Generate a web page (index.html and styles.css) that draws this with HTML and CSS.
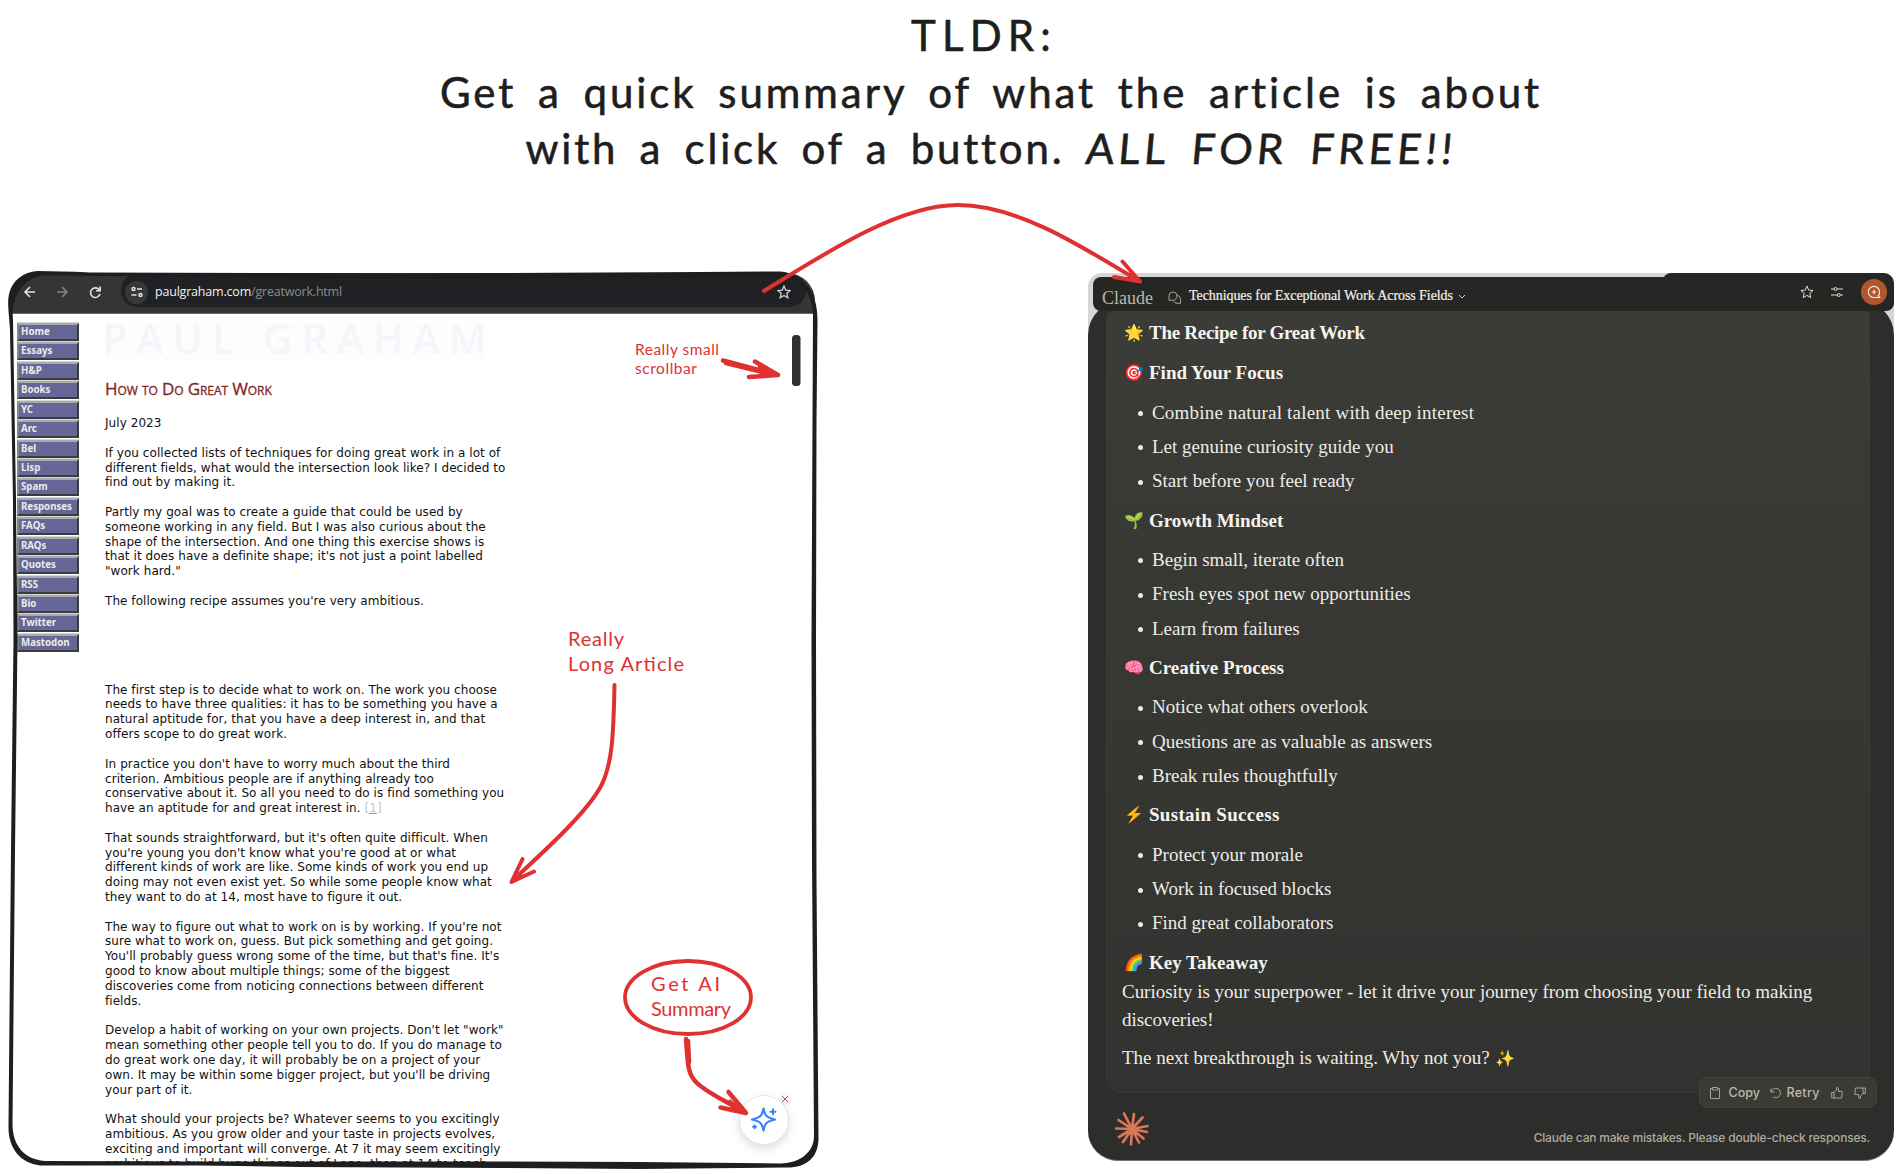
FILE: index.html
```html
<!DOCTYPE html>
<html lang="en">
<head>
<meta charset="utf-8">
<title>TLDR</title>
<link rel="stylesheet" href="styles.css">
</head>
<body>
<main class="canvas">
  <h1 class="headline">
    <span class="line line-1">TLDR:</span>
    <span class="line line-2">Get a quick summary of what the article is about</span>
    <span class="line line-3">with a click of a button. <span class="loud">ALL FOR FREE!!</span></span>
  </h1>

  <section class="browser">
    <header class="toolbar">
      <svg class="nav-icons" width="104" height="37" fill="none" stroke="#e3e3e3" stroke-width="1.6">
        <path d="M23 18H13.5M18 13l-5 5 5 5"/>
        <path d="M45 18h10M50 13l5 5-5 5" stroke="#858585"/>
        <path d="M87.500 16.200A4.800 4.800 0 1 0 88 20M88.200 12.500v4.200h-4.200"/>
      </svg>
      <div class="address">
        <span class="tune"><svg width="14" height="12" fill="none" stroke="#e3e3e3" stroke-width="1.5"><circle cx="3.500" cy="3" r="1.500"/><path d="M7 3h5M1.500 9h5"/><circle cx="10.500" cy="9" r="1.500"/></svg></span>
        <span class="url">paulgraham.com<span class="path">/greatwork.html</span></span>
        <svg class="star" width="14" height="14" viewBox="0 0 14 14" fill="none" stroke="#d0d0d0" stroke-width="1.300"><path d="M7 1l1.700 4.100 4.400.4-3.300 2.900 1 4.300L7 10.400l-3.800 2.300 1-4.300L.9 5.500l4.400-.4z"/></svg>
      </div>
    </header>
    <div class="site">
      <nav class="menu">
        <a>Home</a><a>Essays</a><a>H&amp;P</a><a>Books</a><a>YC</a><a>Arc</a><a>Bel</a><a>Lisp</a><a>Spam</a><a>Responses</a><a>FAQs</a><a>RAQs</a><a>Quotes</a><a>RSS</a><a>Bio</a><a>Twitter</a><a>Mastodon</a>
      </nav>
      <article class="essay">
        <div class="banner">PAUL GRAHAM</div>
        <h2>How to Do Great Work</h2>
        <p>July 2023</p>
        <p>If you collected lists of techniques for doing great work in a lot of<br>different fields, what would the intersection look like? I decided to<br>find out by making it.</p>
        <p>Partly my goal was to create a guide that could be used by<br>someone working in any field. But I was also curious about the<br>shape of the intersection. And one thing this exercise shows is<br>that it does have a definite shape; it's not just a point labelled<br>"work hard."</p>
        <p class="lead-end">The following recipe assumes you're very ambitious.</p>
        <p>The first step is to decide what to work on. The work you choose<br>needs to have three qualities: it has to be something you have a<br>natural aptitude for, that you have a deep interest in, and that<br>offers scope to do great work.</p>
        <p>In practice you don't have to worry much about the third<br>criterion. Ambitious people are if anything already too<br>conservative about it. So all you need to do is find something you<br>have an aptitude for and great interest in. <span class="note">[<u>1</u>]</span></p>
        <p>That sounds straightforward, but it's often quite difficult. When<br>you're young you don't know what you're good at or what<br>different kinds of work are like. Some kinds of work you end up<br>doing may not even exist yet. So while some people know what<br>they want to do at 14, most have to figure it out.</p>
        <p>The way to figure out what to work on is by working. If you're not<br>sure what to work on, guess. But pick something and get going.<br>You'll probably guess wrong some of the time, but that's fine. It's<br>good to know about multiple things; some of the biggest<br>discoveries come from noticing connections between different<br>fields.</p>
        <p>Develop a habit of working on your own projects. Don't let "work"<br>mean something other people tell you to do. If you do manage to<br>do great work one day, it will probably be on a project of your<br>own. It may be within some bigger project, but you'll be driving<br>your part of it.</p>
        <p>What should your projects be? Whatever seems to you excitingly<br>ambitious. As you grow older and your taste in projects evolves,<br>exciting and important will converge. At 7 it may seem excitingly<br>ambitious to build huge things out of Lego, then at 14 to teach</p>
      </article>
    </div>
  </section>

  <section class="chat">
    <div class="backing"></div>
    <div class="shell">
      <div class="reply">
        <h3 class="first"><i class="emoji">🌟</i>The Recipe for Great Work</h3>
        <h3><i class="emoji">🎯</i>Find Your Focus</h3>
        <ul><li class="wide">Combine natural talent with deep interest</li><li>Let genuine curiosity guide you</li><li>Start before you feel ready</li></ul>
        <h3><i class="emoji">🌱</i>Growth Mindset</h3>
        <ul><li>Begin small, iterate often</li><li>Fresh eyes spot new opportunities</li><li>Learn from failures</li></ul>
        <h3><i class="emoji brain">🧠</i>Creative Process</h3>
        <ul><li>Notice what others overlook</li><li>Questions are as valuable as answers</li><li>Break rules thoughtfully</li></ul>
        <h3 class="sustain"><i class="emoji bolt">⚡</i>Sustain Success</h3>
        <ul><li>Protect your morale</li><li>Work in focused blocks</li><li>Find great collaborators</li></ul>
        <h3><i class="emoji">🌈</i>Key Takeaway</h3>
        <p>Curiosity is your superpower - let it drive your journey from choosing your field to making<br>discoveries!</p>
        <p class="closing">The next breakthrough is waiting. Why not you? <i class="emoji">✨</i></p>
      </div>
      <div class="actions">
        <svg width="14" height="14" fill="none" stroke="#a8a497"><path d="M3.500 2.500h-2v10h9v-10h-2M3.500 1.500h5v2.500h-5z"/></svg>
        <span class="copy">Copy</span>
        <svg class="retry-icon" width="12" height="12" fill="none" stroke="#a8a497"><path d="M1 1.500v3.500h3.500M1.300 4.700A4.700 4.700 0 1 1 3 9.800"/></svg>
        <span class="retry">Retry</span>
        <svg class="thumb" width="12" height="12" fill="none" stroke="#a8a497"><path d="M.7 5.500h2.300v5.500H.7zM3 5.500L5.500 3V.7h1.300l.7 1V4.500h3.800L10.600 11H3"/></svg>
        <svg class="thumb down" width="12" height="12" fill="none" stroke="#a8a497"><path d="M.7 5.500h2.300v5.500H.7zM3 5.500L5.500 3V.7h1.300l.7 1V4.500h3.800L10.600 11H3"/></svg>
      </div>
      <footer class="foot">
        <svg width="36" height="36" viewBox="-18 -18 36 36" stroke="#d97757" stroke-width="2.700" stroke-linecap="round">
          <path d="M0 0L-8 -15.500M0 0L2 -15M0 0L10.500 -11.500M0 0L15.500 -3M0 0L15 3M0 0L11.500 9.500M0 0L7 13.500M0 0L-1 15.500M0 0L-9 13M0 0L-13 8M0 0L-16 -.5M0 0L-13.500 -9"/>
        </svg>
        <span>Claude can make mistakes. Please double-check responses.</span>
      </footer>
    </div>
    <header class="chat-bar">
      <span class="brand">Claude</span>
      <svg class="bubbles" width="14" height="14" fill="none" stroke="#a8a497"><path d="M1 9.300V5a4 4 0 0 1 8 0 4 4 0 0 1-4 4.300zM9.300 4.200A4 4 0 0 1 12.500 8v4.300H9A4 4 0 0 1 5.500 10.200"/></svg>
      <span class="chat-title">Techniques for Exceptional Work Across Fields</span>
      <svg width="8" height="6" fill="none" stroke="#d0cdc4"><path d="M1 1l3 3 3-3"/></svg>
    </header>
    <div class="chat-tools">
      <svg width="14" height="14" viewBox="0 0 14 14" fill="none" stroke="#dedbd2"><path d="M7 1l1.700 4.100 4.400.4-3.300 2.900 1 4.300L7 10.400l-3.800 2.300 1-4.300L.9 5.500l4.400-.4z"/></svg>
      <svg width="12" height="10" fill="none" stroke="#dedbd2"><path d="M0 2h3M6 2h6M0 8h6M9.500 8h2.500"/><circle cx="4.500" cy="2" r="1.500"/><circle cx="7.800" cy="8" r="1.500"/></svg>
      <span class="new-chat"><svg width="14" height="14" fill="none" stroke="#f5e9e2" stroke-width="1.200"><path d="M12.500 12.500H7A5.600 5.600 0 1 1 12.500 7.500q0 2-1.300 3.500zM4.800 7h4.400M7 4.800v4.400"/></svg></span>
    </div>
  </section>

  <svg class="ink" width="1904" height="1174" viewBox="0 0 1904 1174">
    <g class="frame">
      <path d="M37 271C24 272 12 280 9 294C7 304 9 312 10 330L13 500L13.500 640L11 850L8.500 1126C8 1148 20 1163 40 1165.500L200 1165.500L300 1167L500 1168L640 1169L786 1167.500C806 1168 818.500 1158 818.500 1138L816.500 880L816 640L816.500 420L817.500 320C817.500 298 810 284 796 277Q790 272 780 271.500L700 272L400 273.500L90 272.500Q60 271 37 271ZM42 275.500L60 275.500L400 279L790 277C804 284 812 296 813 313L812.500 420L811.500 640L812 860L814 1136C814 1150 803 1163 780 1163.500L640 1162L500 1161.500L300 1161.500L200 1161.500L46 1161C25 1160 12.500 1146 12.500 1124L15 850L17.500 640L16 500L13 320C11 300 20 280 42 275.500Z"/>
    </g>
    <rect x="792" y="335" width="8.500" height="51" rx="3.500" fill="#303030"/>
    <circle cx="785" cy="1099" r="7.500" fill="#f7f7f8"/>
    <path d="M782 1096l6 6M788 1096l-6 6" stroke="#bd4b52" stroke-width="1"/>
    <circle class="fab" cx="764" cy="1120" r="24.500"/>
    <g stroke="#3b82f6" fill="none" stroke-linejoin="round" stroke-linecap="round">
      <path stroke-width="2.200" d="M763.500 1108.500c1.500 7.500 3 9 11.500 11-8.500 2-10 3.500-11.500 11-1.500-7.500-3-9-11.500-11 8.500-2 10-3.500 11.500-11z"/>
      <path stroke-width="2" d="M773 1109.200v5M770.500 1111.700h5M754.500 1125.200v3M753 1126.700h3"/>
    </g>
    <g class="arrows">
      <path stroke-width="4" d="M764 291C830 250 900 205 958 205C1015 205 1075 242 1139 281M1122.500 261.500L1140 281.500L1114 277"/>
      <path stroke-width="4.500" d="M723 360.500L778 375M726 363L770 374M755 361.500L778 375L749 377M760 366L766 376"/>
      <path stroke-width="4" d="M614.500 685C613.500 730 613 763 601 786C588 811 548 848 512 881M522.500 859L511.500 882L534 871.500"/>
      <path stroke-width="4.500" d="M686 1039C688 1063 687 1074 697 1083C707 1093 730 1103 745 1113M688 1041L689 1062M728.500 1092L746 1113L720.500 1107.500M730 1102L742 1112"/>
      <ellipse stroke-width="3.800" cx="688" cy="997.500" rx="63" ry="36.500"/>
    </g>
    <g class="labels">
      <text x="635" y="355" font-size="15.500" textLength="84">Really small</text>
      <text x="635" y="374" font-size="15.500" textLength="62">scrollbar</text>
      <text x="568" y="646" font-size="20" textLength="56">Really</text>
      <text x="568" y="671" font-size="20" textLength="116">Long Article</text>
      <text x="651" y="991" font-size="20" textLength="69">Get AI</text>
      <text x="651" y="1016" font-size="20" textLength="80">Summary</text>
    </g>
  </svg>
</main>
</body>
</html>
```
FILE: styles.css
```css
* { box-sizing: border-box; }
body { margin: 0; background: #fff; }
.canvas { position: relative; width: 1904px; height: 1174px; overflow: hidden; background: #fff; }

.headline { margin: 0; padding: 7px 0 0 78px; font: 400 42px/56.700px Lato, sans-serif; color: #1e1e1e; text-align: center; -webkit-text-stroke: .6px #1e1e1e; }
.line { display: block; white-space: nowrap; }
.line-1 { letter-spacing: 6.200px; transform: translateX(-7px); }
.line-2 { letter-spacing: 2.950px; word-spacing: 8px; }
.line-3 { letter-spacing: 2.800px; word-spacing: 7.800px; }
.loud { display: inline-block; letter-spacing: 4.200px; transform: skewX(-5deg); }

/* Browser window */
.browser { position: absolute; left: 12px; top: 273px; width: 803px; height: 890px; border-radius: 28px 28px 26px 32px; overflow: hidden; background: #fff; }
.toolbar { display: flex; height: 40.500px; padding-top: 1px; background: #353535; border-bottom: 1px solid #6a6a6a; }
.nav-icons { flex: none; width: 109px; }
.address { display: flex; align-items: center; width: 685px; height: 33px; padding: 3px 15px 0 4px; background: #202124; border-radius: 18px; }
.tune { display: grid; place-items: center; width: 23px; height: 23px; border-radius: 50%; background: #37383a; }
.url { margin-left: 7px; font: 12.500px/20px "Open Sans", sans-serif; letter-spacing: -.2px; color: #f1f1f1; }
.path { color: #8b8c8e; }
.star { margin-left: auto; }
.site { display: flex; padding: 8px 0 0 5px; }
.menu { display: flex; flex-direction: column; gap: 1.440px; width: 62px; padding-top: 1.400px; }
.menu a { height: 18px; padding-left: 2px; border: solid; border-width: 2px; border-color: #a9a9b0 #3b3b3b #3b3b3b #85858e; background: #666699; font: 700 9.700px/14px "Noto Sans", sans-serif; color: #ecece6; box-shadow: 0 -1px #d8d8d0; }
.essay { margin-left: 26px; font: 12px/14.810px "DejaVu Sans", sans-serif; letter-spacing: .06px; color: #111; white-space: nowrap; }
.banner { width: 379px; height: 41px; background: #fdfdfe; font: 600 41px/32px "Open Sans", sans-serif; letter-spacing: 9px; text-indent: -3px; color: #f5f5fb; }
.essay h2 { margin: 14px 0 15.600px; font: 400 17px/24px "Open Sans", sans-serif; font-variant: small-caps; letter-spacing: -.1px; color: #852424; -webkit-text-stroke: .3px #852424; }
.essay p { margin: 0 0 14.810px; }
.essay .lead-end { margin-bottom: 74.050px; }
.note { color: #c8c8c8; }
.note u { text-decoration-color: #8a8ae0; }

/* Chat window */
.chat { position: absolute; left: 1088px; top: 273px; width: 806px; height: 888px; }
.backing { position: absolute; inset: 0 0 auto; height: 60px; border-radius: 14px 10px 0 0; background: #d6d6d6; }
.shell { position: absolute; inset: 28px 0 0; padding: 10px 24px 0 18px; border-radius: 34px 34px 30px 30px; background: #2d2d2b; border-bottom: 1px solid #777; }
.reply { height: 781.500px; padding: 8px 0 0 15px; border: 1px solid #393936; border-top: 0; border-radius: 6px 4px 0 16px; background: linear-gradient(#3b3b37, #373733 45%, #323230); font: 19px/27px "Liberation Serif", serif; color: #eeece6; }
.reply h3 { display: flex; height: 27px; margin: 0 0 12.400px; font-size: 19px; color: #f6f4ee; }
.reply .first { margin-bottom: 13.200px; letter-spacing: -.28px; }
.reply .sustain { letter-spacing: .3px; }
.emoji { display: inline-block; width: 27px; padding-left: 2px; font: 16px/27px "Noto Color Emoji", sans-serif; letter-spacing: 0; }
.brain { filter: saturate(2.400) hue-rotate(-22deg); }
.bolt { filter: hue-rotate(-20deg) saturate(1.500); }
.reply ul { margin: 0 0 12.300px; padding: 0; list-style: none; }
.reply li { height: 27px; margin: 0 0 7.350px; padding-left: 30px; display: flex; align-items: center; }
.reply li::before { content: ""; width: 5px; height: 5px; margin: 3px 9px 0 -14px; border-radius: 50%; background: #eeece6; }
.reply .wide { letter-spacing: .2px; }
.reply h3:last-of-type { margin-bottom: 2px; }
.reply p { margin: 0; line-height: 28px; letter-spacing: -.03px; white-space: nowrap; }
.reply .closing { margin-top: 10.500px; }
.closing .emoji { padding-left: 1px; }
.actions { position: absolute; right: 17.500px; bottom: 52px; display: flex; align-items: center; width: 178px; height: 31px; padding-left: 9px; border: 1px solid #41413c; border-radius: 8px; background: #3b3b36; font: 500 12.500px/16px Inter, sans-serif; color: #bdb9ac; }
.copy { width: 31px; margin-left: 6px; }
.retry-icon { margin-left: 10px; }
.retry { width: 34px; margin-left: 5px; letter-spacing: .3px; }
.thumb { margin-left: 10.500px; }
.down { transform: scale(-1, -1); }
.foot { display: flex; align-items: center; justify-content: space-between; padding: 18px 0 0 8px; font: 500 12px/16px Inter, sans-serif; letter-spacing: -.2px; color: #aeaa9e; }
.foot span { padding-top: 18px; }
.chat-bar { position: absolute; left: 5px; top: 4px; display: flex; align-items: center; width: 801px; height: 34px; padding-left: 9px; border-radius: 8px; background: #262624; font: 14px/20px "Liberation Serif", serif; color: #f3f1ea; }
.brand { width: 52px; margin-top: 7px; font-size: 18px; color: #bcb7aa; }
.bubbles { margin: 7px 0 0 14px; }
.chat-title { margin: 4px 8px 0 7px; letter-spacing: -.07px; white-space: nowrap; -webkit-text-stroke: .2px #f3f1ea; }
.chat-bar svg:last-child { margin-top: 6px; margin-left: -3px; }
.chat-tools { position: absolute; right: 0; top: 0; display: flex; align-items: center; justify-content: flex-end; gap: 17px; width: 231px; height: 37px; padding-right: 7px; border-radius: 8px 10px 8px 0; background: #262624; }
.new-chat { display: grid; place-items: center; width: 26px; height: 26px; margin-left: 1px; border-radius: 50%; background: #b0562f; }

/* Hand-drawn layer */
.ink { position: absolute; inset: 0; }
.frame { fill: #1e1e1e; }
.fab { fill: #fff; stroke: #e4e4e6; filter: drop-shadow(0 4px 4px rgba(0, 0, 0, .13)); }
.arrows { fill: none; stroke: #e03131; stroke-linecap: round; stroke-linejoin: round; }
.labels { fill: #e03131; font-family: Lato, sans-serif; }
```
